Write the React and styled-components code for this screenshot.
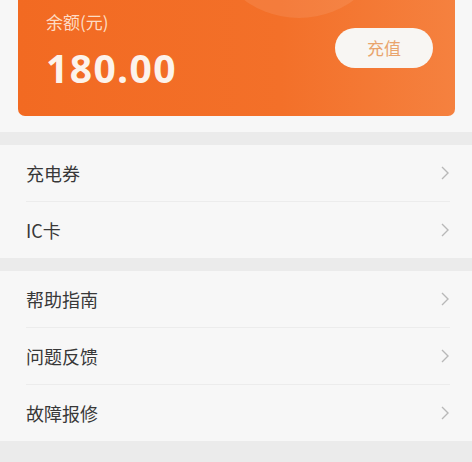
import React from 'react'
import styled, { createGlobalStyle } from 'styled-components'

const Global = createGlobalStyle`
  html, body {
    margin: 0;
    padding: 0;
    background: #ebebeb;
    font-family: "Noto Sans CJK SC", "Noto Sans", sans-serif;
  }
`

const Page = styled.div`
  width: 472px;
  height: 462px;
  overflow: hidden;
  background: #ebebeb;
`

const Header = styled.section`
  background: #f7f7f7;
  padding: 0 17px 16px 18px;
  margin-bottom: 13px;
`

const Card = styled.div`
  position: relative;
  overflow: hidden;
  height: 116px;
  border-radius: 0 0 7px 7px;
  background: linear-gradient(90deg, #f26a22 0%, #f37029 60%, #f5813f 100%);
  display: flex;
  align-items: center;
  justify-content: space-between;
  padding: 0 22px 0 28px;
  box-sizing: border-box;
`

const Glow = styled.div`
  position: absolute;
  left: 192px;
  top: -152px;
  width: 178px;
  height: 170px;
  border-radius: 50%;
  background: rgba(255, 255, 255, 0.09);
`

const Balance = styled.div`
  position: relative;
  display: flex;
  flex-direction: column;
  margin-top: -14px;
`

const Label = styled.span`
  font-family: "Noto Sans CJK SC", sans-serif;
  font-size: 17px;
  color: rgba(255, 236, 222, 0.88);
  line-height: 20px;
`

const Amount = styled.span`
  margin-top: 14px;
  font-family: "Open Sans", "Noto Sans", sans-serif;
  font-weight: 700;
  font-size: 39px;
  line-height: 44px;
  color: #fcf3ec;
  letter-spacing: 1.4px;
`

const Recharge = styled.button`
  position: relative;
  width: 98px;
  height: 40px;
  margin-top: -21px;
  border: none;
  border-radius: 20px;
  background: #f8f6f3;
  color: #e9a46c;
  font-family: "Noto Sans CJK SC", sans-serif;
  font-size: 17px;
`

const Group = styled.div`
  background: #f7f7f7;
  margin-bottom: 13px;
`

const Row = styled.div`
  height: 56px;
  display: flex;
  align-items: center;
  justify-content: space-between;
  padding: 0 22px 0 26px;
  font-size: 18px;
  color: #383838;
  & + & {
    border-top: 1px solid #ececec;
    margin: 0 22px 0 26px;
    padding: 0;
  }
`

const Chevron = () => (
  <svg width="10" height="16" viewBox="0 0 10 16">
    <path d="M2 2 L8 8 L2 14" fill="none" stroke="#b8b8b8" strokeWidth="1.4" />
  </svg>
)

const Item = ({ label }) => (
  <Row>
    <span>{label}</span>
    <Chevron />
  </Row>
)

const App = () => {
  return (
    <Page>
      <Global />
      <Header>
        <Card>
          <Glow />
          <Balance>
            <Label>余额(元)</Label>
            <Amount>180.00</Amount>
          </Balance>
          <Recharge>充值</Recharge>
        </Card>
      </Header>
      <Group>
        <Item label="充电券" />
        <Item label="IC卡" />
      </Group>
      <Group>
        <Item label="帮助指南" />
        <Item label="问题反馈" />
        <Item label="故障报修" />
      </Group>
    </Page>
  )
}

export default App
